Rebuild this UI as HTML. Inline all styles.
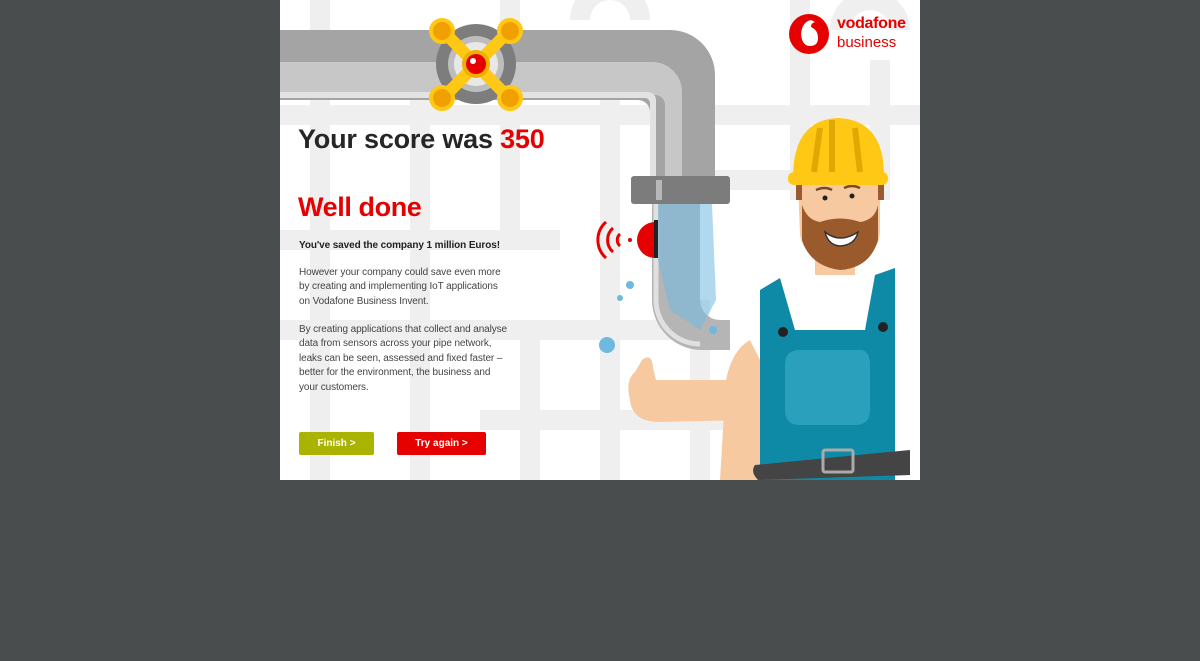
<!DOCTYPE html>
<html><head><meta charset="utf-8"><style>
body{margin:0;background:#4a4d4e;width:1200px;height:661px;overflow:hidden;font-family:"Liberation Sans",Arial,sans-serif}
#card{position:absolute;left:280px;top:0;width:640px;height:480px;background:#fff;overflow:hidden}
svg{position:absolute;left:0;top:0}
h1{position:absolute;left:18px;top:124px;margin:0;font-size:27px;font-weight:bold;color:#262626;letter-spacing:-0.2px}
h2{position:absolute;left:18px;top:192px;margin:0;font-size:27px;font-weight:bold;color:#e60000;letter-spacing:-0.4px}
.p{position:absolute;left:19px;font-size:10px;line-height:14.4px;color:#444;width:212px;letter-spacing:-0.1px}
.btn{position:absolute;top:432px;height:23px;line-height:23px;color:#fff;font-size:10px;font-weight:bold;text-align:center;border-radius:2px}
</style></head><body>
<div id="card">
<svg width="640" height="480" viewBox="0 0 640 480">
 <g fill="none" stroke="#efefef" stroke-width="20">
  <path d="M0 115 H640"/><path d="M0 240 H280"/><path d="M0 330 H420"/><path d="M200 420 H460"/>
  <path d="M40 0 V480"/><path d="M140 100 V480"/><path d="M230 0 V230"/><path d="M250 330 V480"/>
  <path d="M330 60 V480"/><path d="M400 180 H520"/><path d="M520 0 V200"/><path d="M600 60 V200"/>
  <path d="M420 300 V480"/><path d="M300 20 a30 30 0 1 1 60 0"/><path d="M560 30 a30 30 0 1 1 60 0"/>
 </g>
 <path d="M0 30 H390 a45 45 0 0 1 45 45 V185 H370 V112 a12 12 0 0 0 -12 -12 H0 Z" fill="#a4a4a4"/>
 <path d="M0 62 H372 a30 30 0 0 1 30 30 V185 H385 V105 a10 10 0 0 0 -10 -10 H0 Z" fill="#c7c7c7"/>
 <path d="M0 92 H368 a8 8 0 0 1 8 8 V185 H370 V103 a5 5 0 0 0 -5 -5 H0 Z" fill="#e2e2e2"/>
 <path d="M372 200 V300 a50 50 0 0 0 50 50 H450 V320 H440 a20 20 0 0 1 -20 -20 V200 Z" fill="#b5b5b5"/>
 <path d="M376 200 V300 a44 44 0 0 0 44 44" fill="none" stroke="#e0e0e0" stroke-width="5"/>
 <path d="M378 204 L432 204 L436 300 L420 330 L390 310 L378 260 Z" fill="#6fb8e0" opacity=".55"/>
 <rect x="351" y="176" width="99" height="28" rx="3" fill="#7c7c7c"/><rect x="376" y="180" width="6" height="20" fill="#b8b8b8"/>
 <circle cx="327" cy="345" r="8" fill="#6fb8e0"/><circle cx="350" cy="285" r="4" fill="#6fb8e0"/><circle cx="340" cy="298" r="3" fill="#6fb8e0"/><circle cx="433" cy="330" r="4" fill="#6fb8e0"/>
 <path d="M375 222 A18 18 0 0 0 375 258 Z" fill="#e60000"/>
 <rect x="374" y="220" width="4" height="38" fill="#222"/>
 <g fill="none" stroke="#e60000" stroke-width="3"><path d="M340 246 a8 8 0 0 1 0 -12"/><path d="M333 252 a16 16 0 0 1 0 -24"/><path d="M326 258 a24 24 0 0 1 0 -36"/></g><circle cx="350" cy="240" r="2" fill="#e60000"/>
 <circle cx="196" cy="64" r="40" fill="#7d7d7d"/><circle cx="196" cy="64" r="28" fill="#bdbdbd"/><circle cx="196" cy="64" r="22" fill="#e8e8e8"/>
 <g stroke="#ffc814" stroke-width="12" stroke-linecap="round"><path d="M163 31 L229 98"/><path d="M229 31 L163 98"/></g>
 <g fill="#f0a000" stroke="#ffc814" stroke-width="4"><circle cx="162" cy="31" r="11"/><circle cx="230" cy="31" r="11"/><circle cx="162" cy="98" r="11"/><circle cx="230" cy="98" r="11"/></g>
 <circle cx="196" cy="64" r="14" fill="#f0b000"/><circle cx="196" cy="64" r="10" fill="#e60000"/><circle cx="193" cy="61" r="3" fill="#fff"/>
 <path d="M448 480 L450 360 Q455 300 490 275 L520 262 L600 258 Q640 262 640 290 V480 Z" fill="#fff"/>
 <path d="M440 480 L446 380 Q452 350 470 340 L490 380 L500 480 Z" fill="#f6c9a0"/>
 <path d="M350 400 Q345 380 355 372 L362 360 Q372 352 373 368 L376 380 L460 380 L465 420 L380 422 Q352 422 350 400Z" fill="#f6c9a0"/>
 <path d="M480 480 V290 L500 278 L515 330 H585 L595 275 L615 268 V480 Z" fill="#0f8aa6"/>
 <path d="M505 365 Q505 350 520 350 H580 Q590 350 590 365 V410 Q590 425 575 425 H520 Q505 425 505 410 Z" fill="#2aa0bd"/>
 <circle cx="503" cy="332" r="5" fill="#222"/><circle cx="603" cy="327" r="5" fill="#222"/>
 <path d="M475 465 L630 450 V475 L478 480 Q470 472 475 465Z" fill="#444"/><rect x="543" y="450" width="30" height="22" rx="2" fill="none" stroke="#aaa" stroke-width="3"/>
 <rect x="535" y="240" width="40" height="35" fill="#f6c9a0"/>
 <path d="M518 180 Q518 160 545 160 H585 Q600 160 600 185 V230 Q600 260 560 265 Q525 262 520 235 Z" fill="#f6c9a0"/>
 <path d="M516 175 V200 L522 200 V180 Z M604 175 V200 L598 200 V180Z" fill="#9b5a2b"/>
 <path d="M522 205 Q527 220 540 222 Q560 215 580 222 Q595 220 598 205 V240 Q590 268 560 270 Q530 266 522 240 Z" fill="#9b5a2b"/>
 <path d="M545 232 Q560 244 578 232 Q575 245 560 246 Q548 245 545 232Z" fill="#fff" stroke="#333" stroke-width="1.5"/>
 <circle cx="545" cy="198" r="2.5" fill="#222"/><circle cx="572" cy="196" r="2.5" fill="#222"/>
 <path d="M536 190 Q545 186 552 190 M564 188 Q572 184 580 188" stroke="#7a4a25" stroke-width="2.5" fill="none"/>
 <path d="M513 180 Q512 120 558 118 Q605 120 604 178 Z" fill="#ffc814"/><rect x="508" y="172" width="100" height="13" rx="6" fill="#ffc814"/>
 <path d="M540 128 L534 172 M575 128 L580 172 M552 120 L552 172" stroke="#e0a800" stroke-width="6" fill="none"/>
 <circle cx="529" cy="34" r="20" fill="#e60000"/><path d="M531 20 Q522 22 521 34 Q522 46 530 46 Q538 46 538 38 Q538 30 531 27 Q531 23 535 22Z" fill="#fff"/>
</svg>
<div style="position:absolute;left:557px;top:15px;color:#e60000;font-size:16px;line-height:17px;font-weight:bold;letter-spacing:-0.3px">vodafone</div>
<div style="position:absolute;left:557px;top:34px;color:#e60000;font-size:15px;line-height:17px">business</div>
<h1>Your score was <span style="color:#e60000">350</span></h1>
<h2>Well done</h2>
<div class="p" style="top:239px;font-weight:bold;color:#222;width:240px">You've saved the company 1 million Euros!</div>
<div class="p" style="top:266px">However your company could save even more by creating and implementing IoT applications on Vodafone Business Invent.</div>
<div class="p" style="top:323px">By creating applications that collect and analyse data from sensors across your pipe network, leaks can be seen, assessed and fixed faster – better for the environment, the business and your customers.</div>
<div class="btn" style="left:19px;width:75px;background:#a8b400">Finish &gt;</div>
<div class="btn" style="left:117px;width:89px;background:#e60000">Try again &gt;</div>
</div>
</body></html>
